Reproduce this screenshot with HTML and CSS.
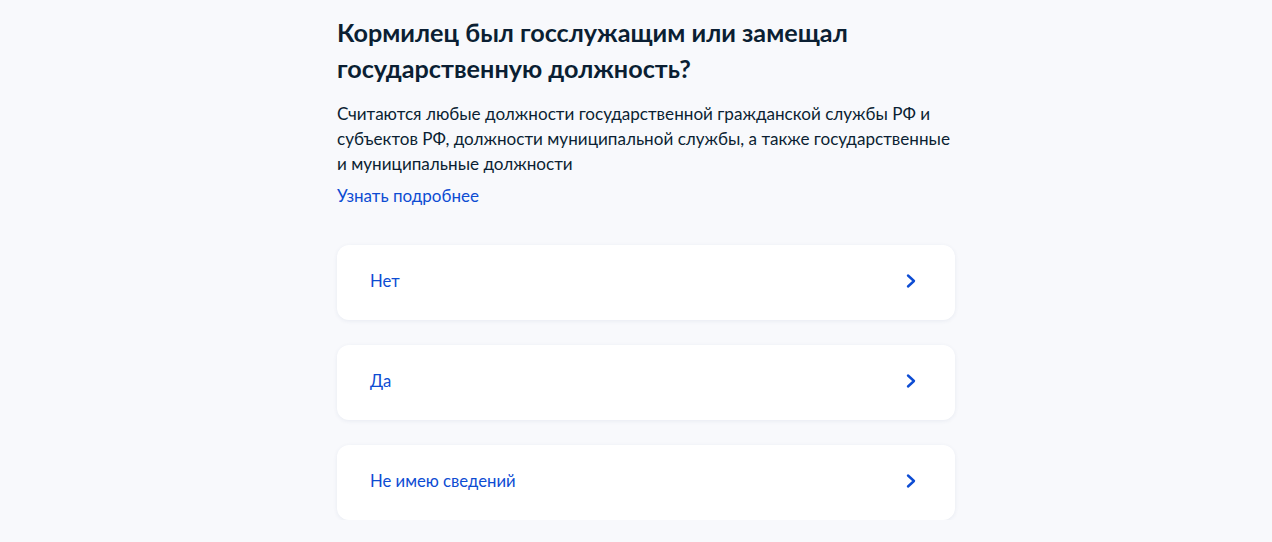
FILE: index.html
```html
<!DOCTYPE html>
<html lang="ru">
<head>
<meta charset="utf-8">
<link rel="stylesheet" href="styles.css">
</head>
<body>
<main class="page">
  <h1 class="title">Кормилец был госслужащим или замещал государственную должность?</h1>
  <p class="desc">Считаются любые должности государственной гражданской службы РФ и субъектов РФ, должности муниципальной службы, а также государственные и муниципальные должности</p>
  <a class="more" href="#">Узнать подробнее</a>
  <div class="options">
    <button class="option"><span>Нет</span><svg class="chev" width="12" height="16" viewBox="0 0 12 16"><path d="M3 2.5 L9 8 L3 13.5" fill="none" stroke="#0d4cd3" stroke-width="2.4" stroke-linecap="round" stroke-linejoin="round"/></svg></button>
    <button class="option"><span>Да</span><svg class="chev" width="12" height="16" viewBox="0 0 12 16"><path d="M3 2.5 L9 8 L3 13.5" fill="none" stroke="#0d4cd3" stroke-width="2.4" stroke-linecap="round" stroke-linejoin="round"/></svg></button>
    <button class="option"><span>Не имею сведений</span><svg class="chev" width="12" height="16" viewBox="0 0 12 16"><path d="M3 2.5 L9 8 L3 13.5" fill="none" stroke="#0d4cd3" stroke-width="2.4" stroke-linecap="round" stroke-linejoin="round"/></svg></button>
  </div>
</main>
</body>
</html>
```

FILE: styles.css
```css
html, body {
  margin: 0;
  padding: 0;
  background: #f8f9fc;
  font-family: Lato, "Noto Sans", sans-serif;
  color: #0b1f33;
}
.page {
  width: 618px;
  margin: 0 auto;
  padding-top: 14px;
  transform: translateX(10px);
}
.title {
  margin: 0;
  font-size: 25.2px;
  line-height: 36px;
  font-weight: 700;
  width: 560px;
}
.desc {
  margin: 15px 0 0;
  font-size: 17.1px;
  line-height: 25px;
}
.more {
  display: block;
  margin-top: 8px;
  font-size: 17px;
  line-height: 24px;
  color: #0d4cd3;
  text-decoration: none;
}
.options {
  display: flex;
  flex-direction: column;
  gap: 25px;
  margin-top: 37px;
}
.option {
  display: flex;
  align-items: center;
  justify-content: space-between;
  height: 75px;
  padding: 0 38px 3px 33px;
  border: 0;
  border-radius: 12px;
  background: #fff;
  box-shadow: 0 1px 4px rgba(38, 61, 110, 0.08);
  font-family: inherit;
  font-size: 16.7px;
  color: #0d4cd3;
  text-align: left;
}
.chev { display: block; }
```
